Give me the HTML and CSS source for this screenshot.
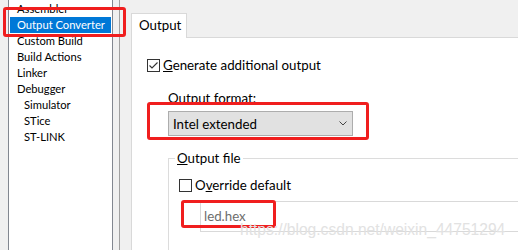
FILE: index.html
```html
<!DOCTYPE html>
<html>
<head>
<meta charset="utf-8">
<link rel="stylesheet" href="styles.css">
</head>
<body>
<div class="app">
  <aside class="side">
    <ul class="tree">
      <li>Assembler</li>
      <li class="sel">Output Converter</li>
      <li>Custom Build</li>
      <li>Build Actions</li>
      <li>Linker</li>
      <li>Debugger</li>
      <li class="sub">Simulator</li>
      <li class="sub">STice</li>
      <li class="sub">ST-LINK</li>
    </ul>
  </aside>
  <main class="main">
    <div class="tabs"><div class="tab">Output</div></div>
    <div class="panel">
      <div class="check">
        <span class="box"><svg width="11" height="11" viewBox="0 0 11 11"><path d="M1.5 5.5 L4 8 L9.5 2.5" fill="none" stroke="#333" stroke-width="1.1"/></svg></span>
        <span><u>G</u>enerate additional output</span>
      </div>
      <div class="flabel">Output <u>f</u>ormat:</div>
      <div class="select">
        <span>Intel extended</span>
        <svg width="8" height="5" viewBox="0 0 8 5"><path d="M0.5 0.5 L4 4 L7.5 0.5" fill="none" stroke="#444" stroke-width="1"/></svg>
      </div>
      <fieldset class="group">
        <legend><u>O</u>utput file</legend>
        <div class="check">
          <span class="box"></span>
          <span>O<u>v</u>erride default</span>
        </div>
        <div class="textbox">led.hex</div>
      </fieldset>
    </div>
  </main>
</div>
<div class="mark m1"></div>
<div class="mark m2"></div>
<div class="mark m3"></div>
<div class="watermark">https://blog.csdn.net/weixin_44751294</div>
</body>
</html>
```
FILE: styles.css
```css
body {
  margin: 0;
  width: 518px;
  height: 250px;
  overflow: hidden;
  background: #f0f0f0;
  font-family: Lato, "Liberation Sans", sans-serif;
  color: #000;
  position: relative;
}
.app {
  display: flex;
  height: 250px;
}
.side {
  width: 120px;
  flex: none;
  box-sizing: border-box;
  padding-left: 8px;
  border-right: 1px solid #a0a0a0;
  display: flex;
}
.tree {
  width: 105px;
  box-sizing: border-box;
  margin: 0;
  padding: 1px 0 0;
  list-style: none;
  background: #fff;
  border-left: 1px solid #828790;
  border-right: 1px solid #828790;
  font-size: 11.2px;
}
.tree li {
  height: 16px;
  line-height: 16px;
  padding-left: 8px;
  white-space: nowrap;
}
.tree li.sel {
  background: #0078d7;
  color: #fff;
  margin: 0 1px;
  padding-left: 7px;
}
.tree li.sub {
  padding-left: 15px;
}
.main {
  flex: 1;
  min-width: 0;
  display: flex;
  flex-direction: column;
  overflow: hidden;
}
.tabs {
  height: 37px;
  flex: none;
  display: flex;
  align-items: flex-end;
  padding-left: 11px;
}
.tab {
  width: 56px;
  height: 25px;
  box-sizing: border-box;
  border: 1px solid #d9d9d9;
  border-bottom: 0;
  background: #fff;
  padding-left: 7px;
  font-size: 13.3px;
  line-height: 23px;
  margin-bottom: -1px;
  position: relative;
  z-index: 1;
}
.panel {
  flex: 1;
  min-height: 0;
  margin-left: 11px;
  border-left: 1px solid #d9d9d9;
  border-top: 1px solid #d9d9d9;
  background: #fff;
  padding: 20px 0 0 15px;
  font-size: 13.3px;
  overflow: hidden;
}
.check {
  display: flex;
  align-items: center;
  gap: 3px;
  height: 14px;
  line-height: 14px;
  white-space: nowrap;
}
.box {
  width: 13px;
  height: 13px;
  box-sizing: border-box;
  border: 1px solid #333;
  background: #fff;
  flex: none;
  display: flex;
}
.flabel {
  margin: 18px 0 0 21px;
  line-height: 16px;
}
.select {
  margin: 5px 0 0 21px;
  width: 185px;
  height: 25px;
  box-sizing: border-box;
  background: #e1e1e1;
  border: 1px solid #adadad;
  display: flex;
  align-items: center;
  justify-content: space-between;
  padding: 0 5px 0 4px;
}
.group {
  margin: 14px 0 0 21px;
  width: 350px;
  height: 100px;
  box-sizing: border-box;
  border: 1px solid #dcdcdc;
  border-right: 0;
  border-bottom: 0;
  padding: 12px 0 0 10px;
}
.group legend {
  padding: 0 2px;
  margin-left: -4px;
  line-height: 16px;
}
.textbox {
  margin: 9px 0 0 21px;
  height: 31px;
  box-sizing: border-box;
  border: 1px solid #d9d9d9;
  border-right: 0;
  color: #6d6d6d;
  padding-left: 3px;
  line-height: 29px;
}
.mark {
  position: absolute;
  box-sizing: border-box;
  border: 3px solid #f01e1e;
  border-radius: 3px;
}
.m1 { left: 3px; top: 7px; width: 123px; height: 30px; }
.m2 { left: 147px; top: 102px; width: 222px; height: 38px; }
.m3 { left: 181px; top: 200px; width: 95px; height: 28px; }
.watermark {
  position: absolute;
  left: 240px;
  top: 222px;
  font-family: "Liberation Sans", Arial, sans-serif;
  font-size: 15.6px;
  line-height: 16px;
  color: #e2e2e2;
  white-space: nowrap;
}
```
